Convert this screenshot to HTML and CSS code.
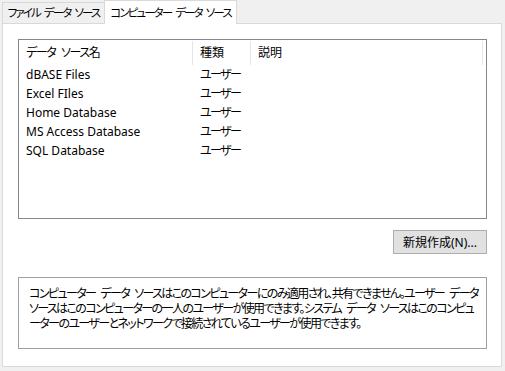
FILE: index.html
```html
<!DOCTYPE html>
<html lang="ja">
<head>
<meta charset="UTF-8" />
<title>ODBC データ ソース</title>
<link rel="stylesheet" href="styles.css">
</head>
<body>

<div class="tabs">
  <div class="tab">ファイル データ ソース</div>
  <div class="tab active">コンピューター データ ソース</div>
</div>

<div class="panel">
  <div class="list">
    <div class="list-head">
      <div class="col name">データ ソース名</div>
      <div class="col kind">種類</div>
      <div class="col desc">説明</div>
    </div>
    <div class="row"><div class="name">dBASE Files</div><div class="kind">ユーザー</div></div>
    <div class="row"><div class="name">Excel FIles</div><div class="kind">ユーザー</div></div>
    <div class="row"><div class="name">Home Database</div><div class="kind">ユーザー</div></div>
    <div class="row"><div class="name">MS Access Database</div><div class="kind">ユーザー</div></div>
    <div class="row"><div class="name">SQL Database</div><div class="kind">ユーザー</div></div>
  </div>

  <div class="actions">
    <button class="btn">新規作成(N)...</button>
  </div>

  <div class="note">
    コンピューター データ ソースはこのコンピューターにのみ適用され、共有できません。ユーザー データ<br>
    ソースはこのコンピューターの一人のユーザーが使用できます。システム データ ソースはこのコンピュ<br>
    ーターのユーザーとネットワークで接続されているユーザーが使用できます。
  </div>
</div>

</body>
</html>
```

FILE: styles.css
```css
body {
  margin: 0;
  background: #f0f0f0;
  font-family: 'Noto Sans', 'Noto Sans CJK JP', sans-serif;
  font-size: 12px;
  color: #000;
  font-feature-settings: "palt";
}
.tabs {
  display: flex;
  align-items: flex-end;
  padding-left: 2px;
  height: 24px;
  margin-bottom: -1px;
  position: relative;
}
.tab {
  width: 103px;
  box-sizing: border-box;
  height: 21px;
  line-height: 20px;
  text-align: center;
  white-space: nowrap;
  border: 1px solid #d9d9d9;
  border-bottom: none;
  background: #f0f0f0;
  margin-bottom: 1px;
  font-size: 11.5px;
  letter-spacing: -1.9px;
  word-spacing: 3px;
}
.tab.active {
  width: 133px;
  height: 24px;
  line-height: 23px;
  background: #fff;
  margin-left: -1px;
  margin-bottom: 0;
}
.panel {
  margin: 0 3px 0 2px;
  height: 344px;
  box-sizing: border-box;
  background: #fff;
  border: 1px solid #d9d9d9;
  padding: 15px 14px 0 15px;
}
.list {
  height: 180px;
  box-sizing: border-box;
  border: 1px solid #828790;
}
.list-head {
  display: flex;
  height: 24px;
  margin-top: 1px;
}
.col {
  line-height: 24px;
  padding-left: 7px;
  box-sizing: border-box;
  border-right: 1px solid #e5e5e5;
  letter-spacing: -1.4px;
  word-spacing: 4px;
}
.col.name { width: 174px; }
.col.kind { width: 58px; letter-spacing: 0; }
.col.desc { width: 232px; letter-spacing: 0; }
.row {
  display: flex;
  height: 19px;
  line-height: 19px;
}
.row .name { width: 174px; padding-left: 7px; box-sizing: border-box; }
.row .kind { padding-left: 7px; letter-spacing: -1.6px; }
.actions {
  display: flex;
  justify-content: flex-end;
  margin-top: 11px;
}
.btn {
  width: 94px;
  height: 24px;
  padding: 0;
  font: inherit;
  background: #e1e1e1;
  border: 1px solid #adadad;
  color: #000;
}
.note {
  margin-top: 23px;
  height: 72px;
  box-sizing: border-box;
  border: 1px solid #a0a0a0;
  padding: 7px 10px;
  line-height: 15px;
  white-space: nowrap;
  font-family: 'Noto Sans CJK JP', sans-serif;
  letter-spacing: -1.6px;
  word-spacing: 4px;
}
```
